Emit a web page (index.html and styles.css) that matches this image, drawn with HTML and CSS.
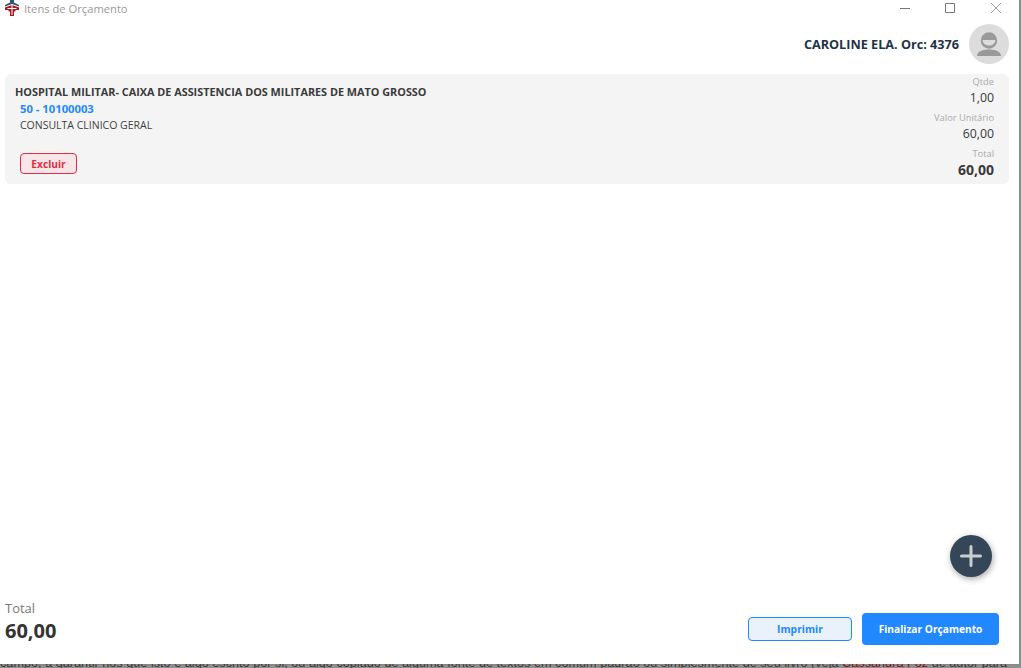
FILE: index.html
```html
<!DOCTYPE html>
<html lang="pt">
<head>
<meta charset="utf-8">
<title>Itens de Orçamento</title>
<link rel="stylesheet" href="styles.css">
</head>
<body>
<p class="behind">campo, a garantir nos que isto é algo escrito por si, ou algo copiado de alguma fonte de textos em comum padrão ou simplesmente de seu livro (veja <span class="behind-link">Cassandra Foz</span> de autor para</p>
<div class="window">
  <header class="titlebar">
    <div class="title-left">
      <svg class="app-icon" viewBox="0 0 16 16" width="16" height="16">
        <path d="M6 0h4v2.500L15 5v1.500L8 4 1 6.500V5l5-2.500z" fill="#2f5470"/>
        <path d="M1 7.500L8 5l7 2.500V10h-3.500v1.500H10V16H6v-4.500H4.500V10H1z" fill="#a31c22"/>
        <path d="M7.500 5h1v10h-1zM3.500 8h9v1h-9z" fill="#fff"/>
      </svg>
      <span class="title-text">Itens de Orçamento</span>
    </div>
    <div class="win-controls">
      <svg class="win-btn" viewBox="0 0 10 10" width="10" height="10"><path d="M0 5.500h10" stroke="#777" fill="none"/></svg>
      <svg class="win-btn" viewBox="0 0 10 10" width="10" height="10"><path d="M.5.5h9v9h-9z" stroke="#777" fill="none"/></svg>
      <svg class="win-btn win-close" viewBox="0 0 10 10" width="10" height="10"><path d="M0 0l10 10M10 0L0 10" stroke="#777" fill="none" stroke-width=".7"/></svg>
    </div>
  </header>
  <section class="user-row">
    <span class="user-name">CAROLINE ELA. Orc: 4376</span>
    <span class="avatar">
      <svg viewBox="0 0 40 40" width="40" height="40">
        <circle cx="20" cy="16.500" r="8.200" fill="#999"/>
        <path d="M13.500 16h13a6.500 5.500 0 0 1-13 0z" fill="#dcdcdc"/>
        <path d="M8 32c0-4.500 6-6.500 12-6.500S32 27.500 32 32z" fill="#999"/>
      </svg>
    </span>
  </section>
  <main class="content">
    <article class="card">
      <div class="card-left">
        <div class="org">HOSPITAL MILITAR- CAIXA DE ASSISTENCIA DOS MILITARES DE MATO GROSSO</div>
        <div class="code">50 - 10100003</div>
        <div class="desc">CONSULTA CLINICO GERAL</div>
        <button class="btn-delete">Excluir</button>
      </div>
      <div class="card-right">
        <div class="lbl">Qtde</div>
        <div class="val">1,00</div>
        <div class="lbl">Valor Unitário</div>
        <div class="val">60,00</div>
        <div class="lbl">Total</div>
        <div class="val strong">60,00</div>
      </div>
    </article>
  </main>
  <button class="fab" aria-label="Adicionar">
    <svg viewBox="0 0 22 22" width="22" height="22"><path d="M11 1.500v19M1.500 11h19" stroke="#c9ced3" stroke-width="3" stroke-linecap="round" fill="none"/></svg>
  </button>
  <footer class="footer">
    <div class="sum">
      <div class="sum-label">Total</div>
      <div class="sum-value">60,00</div>
    </div>
    <div class="actions">
      <button class="btn-print">Imprimir</button>
      <button class="btn-finish">Finalizar Orçamento</button>
    </div>
  </footer>
</div>
</body>
</html>
```
FILE: styles.css
```css
* { box-sizing: border-box; }
html, body { margin: 0; height: 100%; overflow: hidden; }
body { background: #8f8f8f; font-family: "Open Sans", "Noto Sans", sans-serif; }
.behind { position: absolute; left: 0; top: 655px; width: 1021px; margin: 0; font: 12.700px/16px "Liberation Sans", sans-serif; color: #3a3a3a; white-space: nowrap; overflow: hidden; }
.behind-link { color: #8a1010; }
.window { position: relative; width: 1019px; height: 664px; background: #fff; display: flex; flex-direction: column; box-shadow: 0 0 1px #666; }
.titlebar { height: 18px; padding-bottom: 2px; display: flex; justify-content: space-between; align-items: center; }
.title-left { display: flex; align-items: center; gap: 4px; padding-left: 4px; }
.app-icon { display: block; }
.title-text { font-size: 11.200px; color: #9a9a9a; }
.win-controls { display: flex; gap: 35px; padding-right: 18px; }
.win-btn { display: block; }
.win-close { margin-left: 1px; }
.user-row { height: 56px; display: flex; justify-content: flex-end; align-items: center; gap: 10px; padding: 0 10px 4px 0; }
.user-name { font-size: 12.650px; font-weight: 700; color: #1f3347; }
.avatar { width: 40px; height: 40px; border-radius: 50%; background: #dcdcdc; overflow: hidden; }
.avatar svg { display: block; }
.content { flex: 1; padding: 0 10px 0 5px; }
.card { height: 110px; background: #f4f4f4; border-radius: 6px; display: flex; justify-content: space-between; padding: 0 15px 0 10px; }
.card-left { padding-top: 11px; }
.org { font-size: 10.850px; font-weight: 700; color: #3a3a3a; line-height: 14px; }
.code { font-size: 11.250px; font-weight: 700; color: #2288ff; line-height: 14px; margin: 3px 0 0 5px; }
.desc { font-size: 10.500px; color: #3f3f3f; line-height: 14px; margin: 2px 0 0 5px; }
.btn-delete { display: block; margin: 21px 0 0 5px; width: 57px; height: 21px; padding: 0; border: 1px solid #dc2f45; border-radius: 4px; background: #f8e5e8; color: #dc2f45; font: 700 10.200px "Open Sans", sans-serif; }
.card-right { text-align: right; padding-top: 1px; }
.lbl { font-size: 9.300px; color: #aaa; line-height: 13px; }
.val { font-size: 12.300px; color: #3a3a3a; line-height: 19px; margin-bottom: 4px; }
.strong { font-size: 14px; font-weight: 700; }
.fab { position: absolute; left: 950px; top: 535px; width: 42px; height: 42px; border: 0; border-radius: 50%; background: #344658; box-shadow: 1px 2px 6px rgba(0,0,0,.35); display: flex; align-items: center; justify-content: center; padding: 0; }
.footer { height: 64px; display: flex; justify-content: space-between; padding: 0 20px 0 5px; }
.sum-label { font-size: 13px; color: #777; line-height: 18px; margin-top: -1px; }
.sum-value { font-size: 20px; font-weight: 700; color: #333; line-height: 28px; }
.actions { display: flex; align-items: flex-start; gap: 10px; padding-top: 13px; }
.btn-print { margin-top: 4px; width: 104px; height: 24px; padding: 0; border: 1px solid #2288ff; border-radius: 4px; background: #e9f1fb; color: #2288ff; font: 700 10.300px "Open Sans", sans-serif; }
.btn-finish { width: 137px; height: 32px; padding: 0; border: 0; border-radius: 4px; background: #2288ff; color: #fff; font: 700 10.200px "Open Sans", sans-serif; }
```
